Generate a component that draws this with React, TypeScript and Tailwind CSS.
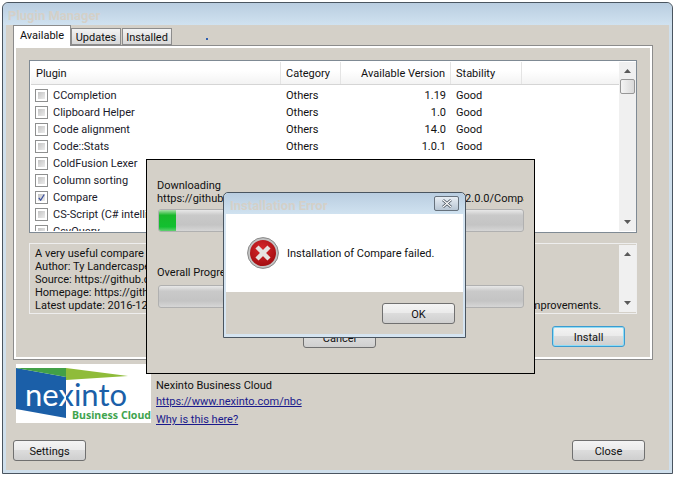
const btn =
  "flex items-center justify-center w-[73px] h-[21px] pt-px border border-[#707070] rounded-[3px] bg-[linear-gradient(#f4f4f4,#ebebeb_45%,#dcdcdc_50%,#cfcfcf)] text-[#111]";
const barBg =
  "h-[23px] border border-[#b0b0b0] rounded-[3px] bg-[linear-gradient(#e8e8e8,#c9c9c9_25%,#c4c4c4_70%,#d6d6d6)]";

const plugins = [
  { name: "CCompletion", category: "Others", version: "1.19", stability: "Good" },
  { name: "Clipboard Helper", category: "Others", version: "1.0", stability: "Good" },
  { name: "Code alignment", category: "Others", version: "14.0", stability: "Good" },
  { name: "Code::Stats", category: "Others", version: "1.0.1", stability: "Good" },
  { name: "ColdFusion Lexer", category: "Others", version: "1.0", stability: "Good" },
  { name: "Column sorting", category: "Others", version: "1.2", stability: "Good" },
  { name: "Compare", category: "Others", version: "2.0.0", stability: "Good", checked: true },
  { name: "CS-Script (C# intellisense)", category: "Others", version: "1.3", stability: "Good" },
  { name: "CsvQuery", category: "Others", version: "1.2", stability: "Good" },
];

function Checkbox({ checked }: { checked?: boolean }) {
  return (
    <div className="size-[13px] shrink-0 border border-[#8e8f8f] bg-white p-[2px]">
      <div className="size-full bg-[linear-gradient(135deg,#c4c4c4,#ececec)]">
        {checked && (
          <svg viewBox="0 0 9 9" className="size-full">
            <path d="M1 5l2.4 3L8 0.6" fill="none" stroke="#3a4f9e" strokeWidth="1.6" />
          </svg>
        )}
      </div>
    </div>
  );
}

function Scrollbar({ thumb }: { thumb?: boolean }) {
  return (
    <div className="w-[17px] shrink-0 flex flex-col items-center bg-[#f0f0f0]">
      <svg viewBox="0 0 7 4" className="w-[7px] h-[4px] mt-[7px] mb-[6px]">
        <path d="M3.5 0L7 4H0z" fill="#5a5a5a" />
      </svg>
      {thumb && (
        <div className="w-[15px] h-[15px] border border-[#979797] rounded-[2px] bg-[linear-gradient(90deg,#f4f4f4,#d9d9d9)]" />
      )}
      <svg viewBox="0 0 7 4" className="w-[7px] h-[4px] mt-auto mb-[7px]">
        <path d="M0 0h7L3.5 4z" fill="#5a5a5a" />
      </svg>
    </div>
  );
}

function HeaderCell({ width, right, children }: { width: string; right?: boolean; children?: string }) {
  return (
    <div className={`${width} shrink-0 h-full flex items-center px-[5px] pt-px border-r border-[#e4e4e4] ${right ? "justify-end" : ""}`}>
      {children}
    </div>
  );
}

function Logo() {
  return (
    <div className="w-[135px] h-[59px] bg-white mt-[4px] ml-[3px] shrink-0">
      <svg viewBox="0 0 135 59" className="size-full">
        <defs>
          <clipPath id="blue-part">
            <path d="M0 4L50 13V54L0 45z" />
          </clipPath>
        </defs>
        <path d="M0 4L50 13V54L0 45z" fill="#1b5fa8" />
        <path d="M0 4H50V13z" fill="#42a047" />
        <path d="M50 4L112 12L50 16z" fill="#8fbc3a" />
        <text x="9" y="42" fontSize="30" fontFamily="Lato, sans-serif" fill="#1b5fa8" textLength="102" lengthAdjust="spacingAndGlyphs">
          nexinto
        </text>
        <g clipPath="url(#blue-part)">
          <text x="9" y="42" fontSize="30" fontFamily="Lato, sans-serif" fill="#fff" textLength="102" lengthAdjust="spacingAndGlyphs">
            nexinto
          </text>
        </g>
        <text x="56" y="54.5" fontSize="10.5" fontWeight="700" fontFamily="'Noto Sans', sans-serif" fill="#3fa44f" textLength="79" lengthAdjust="spacingAndGlyphs">
          Business Cloud
        </text>
      </svg>
    </div>
  );
}

function ErrorIcon() {
  return (
    <svg viewBox="0 0 32 32" className="size-8 shrink-0">
      <defs>
        <radialGradient id="red" cx="45%" cy="35%" r="70%">
          <stop offset="0" stopColor="#d8282c" />
          <stop offset="1" stopColor="#a00c10" />
        </radialGradient>
      </defs>
      <circle cx="16" cy="16" r="15.4" fill="#c4c4c4" stroke="#8a8a8a" />
      <circle cx="16" cy="16" r="13" fill="url(#red)" />
      <path d="M10 10l12 12M22 10L10 22" stroke="#e6e2e0" strokeWidth="4.4" />
    </svg>
  );
}

export default function App() {
  return (
    <div className="relative w-[675px] h-[477px] bg-white p-[2px] pb-[3px] font-['Roboto',sans-serif] text-[11px] leading-[13px] text-[#111] overflow-hidden">
      <div className="h-full border border-[#4a5560] rounded-t-[6px] px-[3px] pb-[3px] bg-[#cfdfec] flex flex-col">
        <div className="h-[22px] shrink-0 flex items-center text-[13px] font-bold text-[#d4d0c8] bg-[linear-gradient(#b9cde0,#d0e2f0)] -mx-[3px] px-[5px] pt-[3px] rounded-t-[6px]">
          Plugin Manager
        </div>
        <div className="flex-1 bg-[#d4d0c8] flex flex-col px-[7px] min-h-0">
          <div className="h-[20px] shrink-0 flex items-end relative">
            <div className="h-[21px] w-[58px] mb-[-1px] pb-[2px] z-10 flex items-center justify-center bg-white border border-[#8c8c8c] border-b-0">
              Available
            </div>
            <div className="h-[17px] w-[50px] pt-px flex items-center justify-center border border-[#8c8c8c] bg-[linear-gradient(#f2f2f2,#d8d8d8)]">
              Updates
            </div>
            <div className="h-[17px] w-[50px] ml-[1px] pt-px flex items-center justify-center border border-[#8c8c8c] bg-[linear-gradient(#f2f2f2,#d8d8d8)]">
              Installed
            </div>
            <div className="size-[2px] bg-[#2f5fb0] ml-[34px] mb-[5px]" />
          </div>
          <div className="w-[640px] h-[315px] shrink-0 border border-[#8c8c8c] bg-white p-[2px]">
            <div className="h-full bg-[#d4d0c8] px-[13px] pt-[12px] flex flex-col">
              <div className="h-[173px] shrink-0 border border-[#7f8a94] bg-white flex p-[1px] pr-0">
                <div className="flex-1 min-w-0 flex flex-col">
                  <div className="h-[23px] shrink-0 flex items-center border-b border-[#d5d5d5] bg-[linear-gradient(#fff,#fff_40%,#f3f3f3)]">
                    <HeaderCell width="w-[250px]">Plugin</HeaderCell>
                    <HeaderCell width="w-[60px]">Category</HeaderCell>
                    <HeaderCell width="w-[110px]" right>Available Version</HeaderCell>
                    <HeaderCell width="w-[71px]">Stability</HeaderCell>
                  </div>
                  <div className="flex-1 overflow-hidden pt-[2px]">
                    {plugins.map((p) => (
                      <div key={p.name} className="h-[17px] flex items-center">
                        <div className="w-[250px] flex items-center gap-[5px] pl-[4px] text-[#1a1a2a]">
                          <Checkbox checked={p.checked} />
                          <span className="whitespace-nowrap">{p.name}</span>
                        </div>
                        <div className="w-[60px] pl-[5px]">{p.category}</div>
                        <div className="w-[110px] text-right pr-[5px]">{p.version}</div>
                        <div className="w-[71px] pl-[5px]">{p.stability}</div>
                      </div>
                    ))}
                  </div>
                </div>
                <Scrollbar thumb />
              </div>
              <div className="h-[71px] shrink-0 mt-[10px] border border-[#eeeeee] flex p-[1px] pr-0">
                <div className="flex-1 min-w-0 px-[4px] pt-[2px] whitespace-nowrap overflow-hidden">
                  <div>A very useful compare plugin for Notepad++</div>
                  <div>Author: Ty Landercasper</div>
                  <div>Source: https://github.com/pnedev/compare-plugin</div>
                  <div>Homepage: https://github.com/pnedev/compare-plugin</div>
                  <div>
                    Latest update: 2016-12-04
                    <span className="pl-[365px]">improvements.</span>
                  </div>
                </div>
                <Scrollbar />
              </div>
              <div className="flex justify-end mt-[12px] pr-[12px]">
                <div className={`${btn} !border-[#3c9bd0] shadow-[inset_0_0_0_1px_#8fdcf5]`}>Install</div>
              </div>
            </div>
          </div>
          <div className="flex-1 flex relative">
            <Logo />
            <div className="pl-[5px] pt-[19px] flex flex-col">
              <div>Nexinto Business Cloud</div>
              <a className="mt-[3px] underline text-[#1a1a8c]">https://www.nexinto.com/nbc</a>
              <a className="mt-[5px] underline text-[#1a1a8c]">Why is this here?</a>
            </div>
          </div>
          <div className="flex justify-between shrink-0 pb-[9px] pr-[17px]">
            <div className={btn}>Settings</div>
            <div className={btn}>Close</div>
          </div>
        </div>
      </div>

      {/* progress window */}
      <div className="absolute left-[146px] top-[159px] w-[389px] h-[215px] border border-black bg-[#d4d0c8] px-[10px] pt-[19px] flex flex-col">
        <div>Downloading</div>
        <div className="whitespace-nowrap overflow-hidden w-[367px]">
          https://github.com/pnedev/comparePlus/releases/download/v2.0.0/ComparePlugin.zip
        </div>
        <div className={`${barBg} w-[366px] mt-[4px] ml-[1px] overflow-hidden`}>
          <div className="h-full w-[17px] bg-[linear-gradient(#a8e0a8,#18b82a_25%,#12c030_80%,#60d070)]" />
        </div>
        <div className="mt-[34px]">Overall Progress</div>
        <div className={`${barBg} w-[366px] mt-[6px] ml-[1px]`} />
        <div className={`${btn} mt-[19px] ml-[146px]`}>Cancel</div>
      </div>

      {/* error dialog */}
      <div className="absolute left-[223px] top-[192px] w-[243px] h-[146px] border border-[#4a5560] rounded-t-[5px] bg-[#d5e4f1] px-[2px] pb-[3px] flex flex-col">
        <div className="h-[21px] shrink-0 flex items-center justify-between -mx-[2px] px-[6px] pt-[3px] rounded-t-[5px] bg-[linear-gradient(#b9cde0,#d0e2f0)] text-[13px] font-bold text-[#d4d0c8]">
          Installation Error
          <div className="w-[25px] h-[15px] -mt-[3px] flex items-center justify-center border border-[#66717c] rounded-[2px] bg-[linear-gradient(#e8eef4,#b8c6d4)]">
            <svg viewBox="0 0 12 9" className="w-[12px] h-[9px]">
              <path d="M2 1l8 7M10 1L2 8" stroke="#3a4550" strokeWidth="2.6" />
              <path d="M2 1l8 7M10 1L2 8" stroke="#fff" strokeWidth="1.2" />
            </svg>
          </div>
        </div>
        <div className="h-[78px] shrink-0 bg-white flex items-center gap-[8px] pl-[21px]">
          <ErrorIcon />
          <span className="pt-px">Installation of Compare failed.</span>
        </div>
        <div className="flex-1 bg-[#d4d0c8] flex justify-end pt-[11px] pr-[8px]">
          <div className={btn}>OK</div>
        </div>
      </div>
    </div>
  );
}
